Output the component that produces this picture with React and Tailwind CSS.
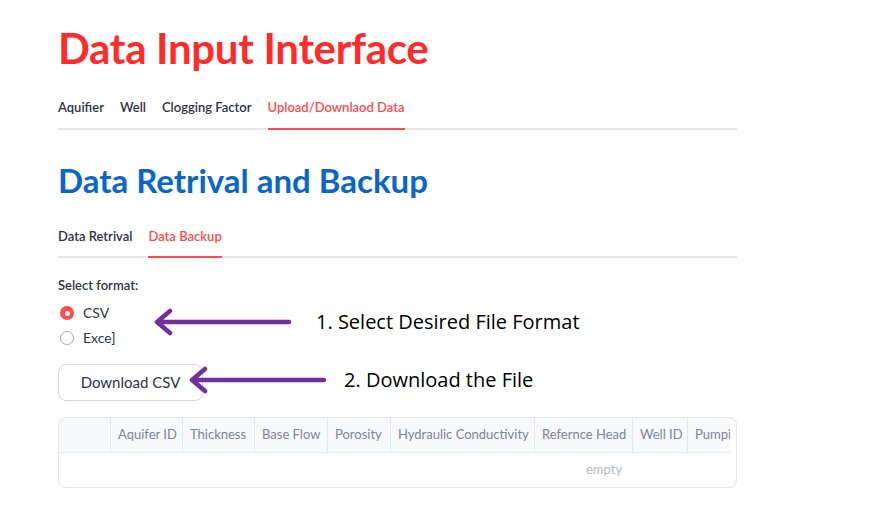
import { useState } from "react";

const columns = [
  { label: "", w: "w-[52px]" },
  { label: "Aquifer ID", w: "w-[72px]" },
  { label: "Thickness", w: "w-[72px]" },
  { label: "Base Flow", w: "w-[73px]" },
  { label: "Porosity", w: "w-[63px]" },
  { label: "Hydraulic Conductivity", w: "w-[144px]" },
  { label: "Refernce Head", w: "w-[98px]" },
  { label: "Well ID", w: "w-[55px]" },
  { label: "Pumping Rate", w: "w-[100px]" },
];

function Arrow() {
  return (
    <svg width="140" height="28" viewBox="0 0 140 28">
      <path
        d="M137 14 H8 M18 3 L5 14 L18 25"
        fill="none"
        stroke="#7030a0"
        strokeWidth="4.5"
        strokeLinecap="round"
        strokeLinejoin="round"
      />
    </svg>
  );
}

export default function App() {
  const [format, setFormat] = useState("CSV");

  return (
    <div className="relative w-[888px] h-[528px] bg-white overflow-hidden font-['Lato',sans-serif] text-[#31333f]">
      <div className="w-[679px] ml-[58px] pt-[24px]">
        <h1 className="text-[42px] font-bold leading-[48px] text-[#ff2b2b] tracking-[-0.3px]">
          Data Input Interface
        </h1>

        <div className="mt-[26px] flex gap-[16px] border-b-2 border-[#e6e7ea] text-[13px] font-semibold">
          <span className="pb-[10px]">Aquifier</span>
          <span className="pb-[10px]">Well</span>
          <span className="pb-[10px]">Clogging Factor</span>
          <span className="pb-[10px] text-[#ff4b4b] border-b-2 border-[#ff4b4b] -mb-[2px]">
            Upload/Downlaod Data
          </span>
        </div>

        <h2 className="mt-[28px] text-[33px] font-bold leading-[44px] text-[#0b66c9]">
          Data Retrival and Backup
        </h2>

        <div className="mt-[25px] flex gap-[16px] border-b-2 border-[#e6e7ea] text-[13px] font-semibold">
          <span className="pb-[10px]">Data Retrival</span>
          <span className="pb-[10px] text-[#ff4b4b] border-b-2 border-[#ff4b4b] -mb-[2px]">
            Data Backup
          </span>
        </div>

        <div className="mt-[19px] text-[13px] font-semibold leading-[17px]">Select format:</div>
        <div className="mt-[11px] flex flex-col gap-[9px] text-[14px] leading-[16px]">
          {["CSV", "Exce]"].map((opt) => {
            const active = format === opt;
            return (
              <label
                key={opt}
                className="flex items-center gap-[9px] ml-[2px] cursor-pointer"
                onClick={() => setFormat(opt)}
              >
                <span
                  className={
                    active
                      ? "w-[14px] h-[14px] rounded-full bg-[#ff4b4b] flex items-center justify-center"
                      : "w-[14px] h-[14px] rounded-full border border-[#a3a8b4] bg-white"
                  }
                >
                  {active && <span className="w-[5px] h-[5px] rounded-full bg-white" />}
                </span>
                {opt}
              </label>
            );
          })}
        </div>

        <button className="mt-[18px] h-[37px] w-[145px] rounded-lg border border-[#d6d6d9] bg-white text-[15px] text-center">
          Download CSV
        </button>

        <div className="mt-[16px] h-[71px] rounded-lg border border-[#e6e7ea] overflow-hidden">
          <div className="w-[671px] overflow-hidden">
            <div className="flex h-[35px] bg-[#f8f9fb] border-b border-[#e6e7ea] text-[13px] text-[#808495] whitespace-nowrap">
              {columns.map((c, i) => (
                <div
                  key={i}
                  className={`${c.w} shrink-0 flex items-center px-[7px] border-r border-[#e6e7ea]`}
                >
                  {c.label}
                </div>
              ))}
            </div>
          </div>
          <div className="h-[34px] flex items-center pl-[527px] text-[13px] text-[#b7b9c2]">
            empty
          </div>
        </div>
      </div>

      <div className="absolute left-[152px] top-[307px] flex items-center gap-[24px]">
        <Arrow />
        <span className="text-[20px] text-black font-['Open_Sans',sans-serif]">1. Select Desired File Format</span>
      </div>
      <div className="absolute left-[187px] top-[365px] flex items-center gap-[17px]">
        <Arrow />
        <span className="text-[20px] text-black font-['Open_Sans',sans-serif]">2. Download the File</span>
      </div>
    </div>
  );
}
